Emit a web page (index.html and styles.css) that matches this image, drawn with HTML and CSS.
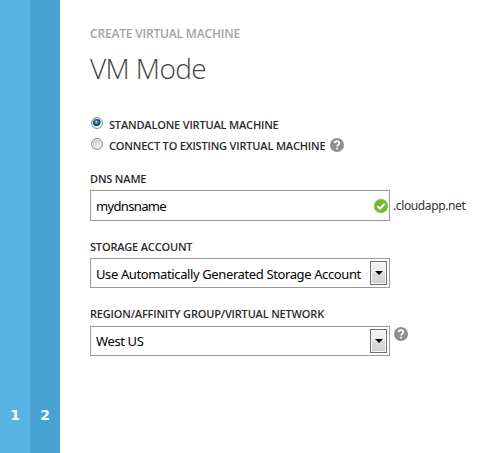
FILE: index.html
```
<!DOCTYPE html>
<html lang="en">
<head>
<meta charset="utf-8">
<title>Create Virtual Machine</title>
<link rel="stylesheet" href="styles.css">
</head>
<body>
<div class="wizard">
  <nav class="steps">
    <div class="step">1</div>
    <div class="step current">2</div>
  </nav>
  <main class="content">
    <div class="eyebrow">CREATE VIRTUAL MACHINE</div>
    <h1>VM Mode</h1>
    <div class="options">
      <label class="option"><span class="radio checked"></span><span class="caption standalone">STANDALONE VIRTUAL MACHINE</span></label>
      <label class="option"><span class="radio"></span><span class="caption connect">CONNECT TO EXISTING VIRTUAL MACHINE</span>
        <svg class="help" viewBox="0 0 14 14"><circle cx="7" cy="7" r="7"/><path d="M4.7 5.1C4.8 2.5 9.4 2.6 9.3 5.2C9.2 6.8 7.1 6.7 7.1 8.5M7.1 9.7V11.4"/></svg>
      </label>
    </div>
    <section class="field dns">
      <div class="label dns-label">DNS NAME</div>
      <div class="row">
        <div class="box"><span class="value dns-value">mydnsname</span>
          <svg class="valid" viewBox="0 0 14 14"><circle cx="7" cy="7" r="7"/><path d="M3.4 7.1L6 9.6L10.6 4.7"/></svg>
        </div>
        <span class="suffix">.cloudapp.net</span>
      </div>
    </section>
    <section class="field storage">
      <div class="label storage-label">STORAGE ACCOUNT</div>
      <div class="row">
        <div class="box select"><span class="value storage-value">Use Automatically Generated Storage Account</span><span class="drop"></span></div>
      </div>
    </section>
    <section class="field region">
      <div class="label region-label">REGION/AFFINITY GROUP/VIRTUAL NETWORK</div>
      <div class="row">
        <div class="box select"><span class="value region-value">West US</span><span class="drop"></span></div>
        <svg class="help" viewBox="0 0 14 14"><circle cx="7" cy="7" r="7"/><path d="M4.7 5.1C4.8 2.5 9.4 2.6 9.3 5.2C9.2 6.8 7.1 6.7 7.1 8.5M7.1 9.7V11.4"/></svg>
      </div>
    </section>
  </main>
</div>
</body>
</html>
```
FILE: styles.css
```
* { box-sizing: border-box; }
body {
  margin: 0;
  background: #fff;
  color: #333;
  font-family: "Noto Sans", "Open Sans", sans-serif;
  font-size: 12px;
  white-space: nowrap;
}
.wizard { display: flex; height: 453px; overflow: hidden; }
.steps { display: flex; flex: none; }
.step {
  display: flex;
  width: 30px;
  align-items: flex-end;
  justify-content: center;
  padding-bottom: 28px;
  background: #59b4e4;
  color: #fff;
  font-family: "DejaVu Sans", sans-serif;
  font-size: 14px;
  font-weight: 700;
  line-height: 20px;
}
.current { background: #46a3d3; }
.content { flex: 1; padding: 24px 0 0 30px; }
.eyebrow {
  color: #a3a3a3;
  font-family: "Open Sans", sans-serif;
  font-weight: 600;
  line-height: 20px;
  letter-spacing: -0.18px;
}
h1 {
  margin: 4px 0 0;
  color: #444;
  font-family: "Open Sans", sans-serif;
  font-size: 28px;
  font-weight: 300;
  line-height: 40px;
  letter-spacing: -0.6px;
}
.options { margin-top: 25px; }
.option { display: flex; height: 21px; align-items: flex-start; }
.radio {
  width: 12px;
  height: 12px;
  flex: none;
  margin: 4px 6px 0 1px;
  border: 1px solid #8e8f8f;
  border-radius: 50%;
  background: radial-gradient(circle at 60% 65%, #f5f5f5, #c5c9cc 70%);
  box-shadow: inset 0 0 0 1px #eee;
}
.checked { background: radial-gradient(circle at 45% 40%, #8fe0f8 0, #2686af 20%, #0b334f 43%, #e2e7e9 55%); }
.caption, .label {
  color: #2c2c2c;
  font-family: "Open Sans", sans-serif;
  font-size: 11px;
  font-weight: 600;
  line-height: 16px;
  letter-spacing: -0.18px;
}
.caption { margin-top: 4px; }
.help, .valid { width: 14px; height: 14px; flex: none; }
.help circle { fill: #8f8f8f; }
.help path { fill: none; stroke: #fff; stroke-width: 1.8; }
.option .help { margin: 4px 0 0 5px; }
.dns { margin-top: 16px; }
.row { display: flex; }
.box {
  display: flex;
  width: 300px;
  height: 31px;
  flex: none;
  align-items: center;
  justify-content: space-between;
  margin-top: 3px;
  padding: 0 2px 0 5px;
  border: 1px solid #9b9b9b;
  background: #fff;
}
.select { height: 30px; }
.value { color: #000; font-size: 13px; line-height: 20px; letter-spacing: -0.38px; }
.dns-value { letter-spacing: -0.65px; }
.storage-value { padding-top: 2px; }
.valid { margin-right: -1px; }
.valid circle { fill: #73b92e; }
.valid path { fill: none; stroke: #fff; stroke-width: 2; }
.suffix { margin: 9px 0 0 3px; line-height: 20px; letter-spacing: -0.38px; }
.storage { margin-top: 18px; }
.region { margin-top: 18px; }
.region .box { margin-top: 4px; }
.drop {
  display: flex;
  width: 17px;
  height: 24px;
  flex: none;
  align-items: center;
  justify-content: center;
  border: 1px solid #707070;
  background: linear-gradient(#f3f3f3 0, #ebebeb 50%, #ddd 50%, #cfcfcf);
  box-shadow: inset 0 0 0 1px #f7f7f7;
}
.drop::before {
  content: "";
  border: 4px solid transparent;
  border-top-color: #000;
  border-bottom: 0;
}
.region .help { margin: 5px 0 0 4px; }
```
